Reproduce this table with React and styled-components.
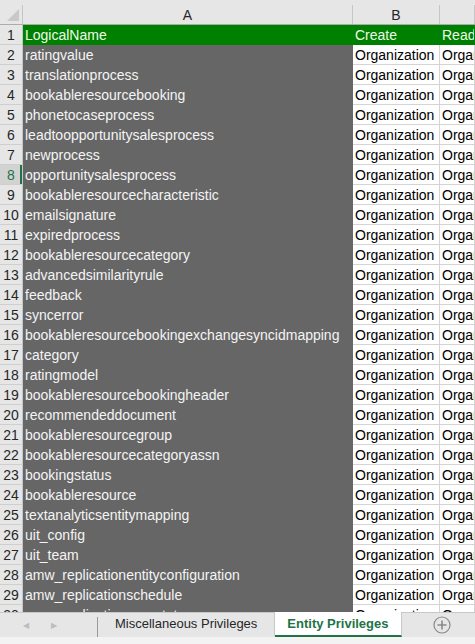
import React from "react"
import styled, { createGlobalStyle } from "styled-components"

const names = [
  "ratingvalue",
  "translationprocess",
  "bookableresourcebooking",
  "phonetocaseprocess",
  "leadtoopportunitysalesprocess",
  "newprocess",
  "opportunitysalesprocess",
  "bookableresourcecharacteristic",
  "emailsignature",
  "expiredprocess",
  "bookableresourcecategory",
  "advancedsimilarityrule",
  "feedback",
  "syncerror",
  "bookableresourcebookingexchangesyncidmapping",
  "category",
  "ratingmodel",
  "bookableresourcebookingheader",
  "recommendeddocument",
  "bookableresourcegroup",
  "bookableresourcecategoryassn",
  "bookingstatus",
  "bookableresource",
  "textanalyticsentitymapping",
  "uit_config",
  "uit_team",
  "amw_replicationentityconfiguration",
  "amw_replicationschedule",
  "amw_replicationsyncstatus",
]

const SELECTED = 8

const App = () => {
  return (
    <>
      <Global />
      <Sheet>
        <ColHeaders>
          <Corner>
            <svg width="12" height="12" viewBox="0 0 12 12">
              <polygon points="12,0 12,12 0,12" fill="#c8c8c8" />
            </svg>
          </Corner>
          <ColHead>A</ColHead>
          <ColHead>B</ColHead>
          <ColHead />
        </ColHeaders>
        <Grid>
          <Row>
            <RowNum>1</RowNum>
            <Cell $kind="head">LogicalName</Cell>
            <Cell $kind="head">Create</Cell>
            <Cell $kind="head">Read</Cell>
          </Row>
          {names.map((name, i) => {
            const n = i + 2
            return (
              <Row key={n}>
                <RowNum $selected={n === SELECTED}>{n}</RowNum>
                <Cell $kind="dark">{name}</Cell>
                <Cell>Organization</Cell>
                <Cell>Organization</Cell>
              </Row>
            )
          })}
        </Grid>
        <TabBar>
          <Arrows>
            <Arrow>◀</Arrow>
            <Arrow>▶</Arrow>
          </Arrows>
          <Divider />
          <Tab>Miscellaneous Privileges</Tab>
          <Tab $active>Entity Privileges</Tab>
          <AddTab>
            <svg width="18" height="18" viewBox="0 0 18 18">
              <circle cx="9" cy="9" r="8" fill="none" stroke="#8a8a8a" strokeWidth="1.2" />
              <path d="M9 4.5v9M4.5 9h9" stroke="#8a8a8a" strokeWidth="1.6" />
            </svg>
          </AddTab>
        </TabBar>
      </Sheet>
    </>
  )
}

export default App

const Global = createGlobalStyle`
  html, body {
    margin: 0;
    padding: 0;
    background: #ffffff;
    overflow: hidden;
  }
  * {
    box-sizing: border-box;
  }
`

const Sheet = styled.div`
  width: 475px;
  height: 644px;
  display: flex;
  flex-direction: column;
  overflow: hidden;
  font-family: "Liberation Sans", Arial, sans-serif;
  font-size: 14px;
`

const ColHeaders = styled.div`
  display: grid;
  grid-template-columns: 23px 330px 87px 1fr;
  height: 25px;
  padding-top: 5px;
  background: #e6e6e6;
  border-bottom: 1px solid #ababab;
  flex-shrink: 0;
`

const Corner = styled.div`
  display: flex;
  align-items: flex-end;
  justify-content: flex-end;
  padding: 0 3px 3px 0;
  border-right: 1px solid #c6c6c6;
`

const ColHead = styled.div`
  display: flex;
  align-items: center;
  justify-content: center;
  color: #262626;
  font-size: 14px;
  border-right: 1px solid #c6c6c6;
`

const Grid = styled.div`
  flex: 1;
  overflow: hidden;
`

const Row = styled.div`
  display: grid;
  grid-template-columns: 23px 330px 87px 1fr;
  height: 20px;
`

const RowNum = styled.div`
  display: flex;
  align-items: center;
  justify-content: center;
  background: ${({ $selected }) => ($selected ? "#d2d2d2" : "#e6e6e6")};
  color: ${({ $selected }) => ($selected ? "#217346" : "#262626")};
  border-bottom: 1px solid #cfcfcf;
  border-right: 1px solid #c6c6c6;
  box-shadow: ${({ $selected }) => ($selected ? "inset -2px 0 0 #217346" : "none")};
  font-size: 14px;
`

const kinds = {
  head: { bg: "#008000", color: "#eefbe9", line: "#008000" },
  dark: { bg: "#666666", color: "#f4f4f4", line: "#666666" },
  plain: { bg: "#ffffff", color: "#000000", line: "#d4d4d4" },
}

const Cell = styled.div`
  display: flex;
  align-items: flex-end;
  padding: 0 0 1px 2px;
  white-space: nowrap;
  overflow: hidden;
  background: ${({ $kind = "plain" }) => kinds[$kind].bg};
  color: ${({ $kind = "plain" }) => kinds[$kind].color};
  border-right: 1px solid ${({ $kind = "plain" }) => kinds[$kind].line};
  border-bottom: 1px solid ${({ $kind = "plain" }) => kinds[$kind].line};
`

const TabBar = styled.div`
  height: 32px;
  flex-shrink: 0;
  display: flex;
  align-items: stretch;
  background: #e6e6e6;
  border-top: 1px solid #c8c8c8;
  border-bottom: 7px solid #f3f3f3;
  font-size: 13px;
`

const Arrows = styled.div`
  display: flex;
  align-items: center;
  gap: 22px;
  padding-left: 23px;
  width: 97px;
`

const Arrow = styled.span`
  color: #bdbdbd;
  font-size: 8px;
`

const Divider = styled.div`
  width: 1px;
  margin: 4px 0 0;
  background: #9a9a9a;
`

const Tab = styled.div`
  display: flex;
  align-items: center;
  padding: ${({ $active }) => ($active ? "0 12px" : "0 17px")};
  margin-top: -1px;
  background: ${({ $active }) => ($active ? "#ffffff" : "transparent")};
  color: ${({ $active }) => ($active ? "#217346" : "#262626")};
  font-weight: ${({ $active }) => ($active ? 700 : 400)};
  border-bottom: 2px solid ${({ $active }) => ($active ? "#217346" : "transparent")};
  border-right: 1px solid #c8c8c8;
`

const AddTab = styled.div`
  display: flex;
  align-items: center;
  padding-left: 31px;
`
